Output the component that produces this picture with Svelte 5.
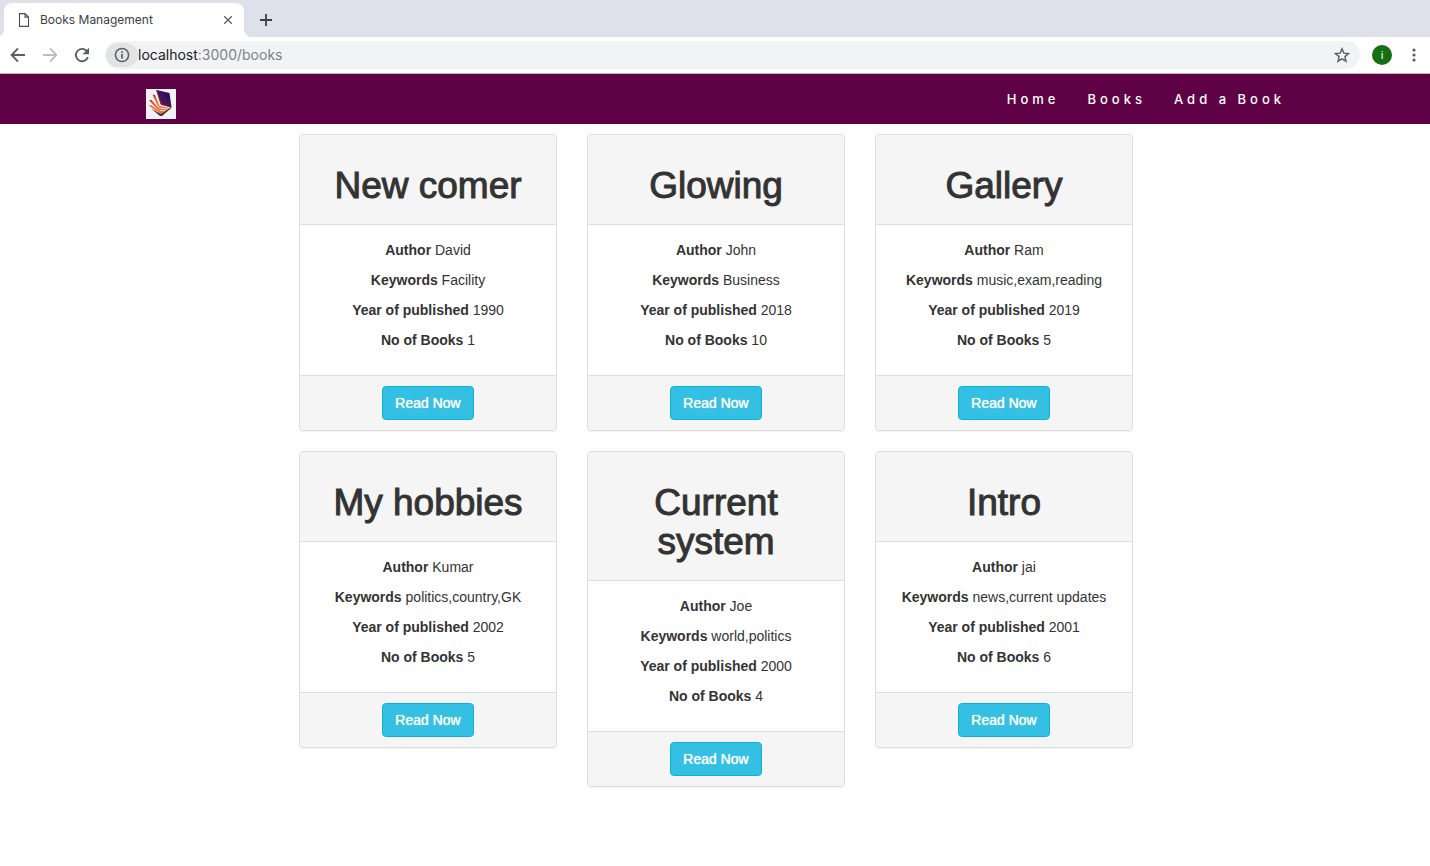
<script>
  const links = ['Home', 'Books', 'Add a Book'];
  const books = [
    { title: 'New comer', author: 'David', keywords: 'Facility', year: 1990, count: 1 },
    { title: 'Glowing', author: 'John', keywords: 'Business', year: 2018, count: 10 },
    { title: 'Gallery', author: 'Ram', keywords: 'music,exam,reading', year: 2019, count: 5 },
    { title: 'My hobbies', author: 'Kumar', keywords: 'politics,country,GK', year: 2002, count: 5 },
    { title: 'Current system', author: 'Joe', keywords: 'world,politics', year: 2000, count: 4 },
    { title: 'Intro', author: 'jai', keywords: 'news,current updates', year: 2001, count: 6 }
  ];
</script>

<div class="browser">
  <div class="tabs">
    <div class="tab">
      <svg class="file" width="12" height="14" viewBox="0 0 12 14" fill="none" stroke="#4a4d51" stroke-width="1.1">
        <path d="M1.500 .6h5.500l3.500 3.500v9.300h-9z M7 .6v3.500h3.500" />
      </svg>
      <span class="tab-title">Books Management</span>
      <button class="plain" aria-label="Close tab">
        <svg width="10" height="10" viewBox="0 0 10 10" stroke="#5f6368" stroke-width="1.4"><path d="M1.2 1.2l7.6 7.6M8.8 1.2L1.2 8.8" /></svg>
      </button>
    </div>
    <button class="plain new-tab" aria-label="New tab">
      <svg width="12" height="12" viewBox="0 0 12 12" stroke="#3c4043" stroke-width="1.8"><path d="M6 0v12M0 6h12" /></svg>
    </button>
  </div>
  <div class="toolbar">
    <button class="plain tool" aria-label="Back">
      <svg width="16" height="16" viewBox="0 0 16 16" fill="none" stroke="#5a5e63" stroke-width="1.9"><path d="M15 8H2M8 1.3L1.6 8 8 14.7" /></svg>
    </button>
    <button class="plain tool" aria-label="Forward">
      <svg width="16" height="16" viewBox="0 0 16 16" fill="none" stroke="#bcbec1" stroke-width="1.9"><path d="M1 8h13M8 1.3L14.4 8 8 14.7" /></svg>
    </button>
    <button class="plain tool" aria-label="Reload">
      <svg width="16" height="16" viewBox="0 0 16 16" fill="none" stroke="#5a5e63" stroke-width="1.9"><path d="M13.9 10.2A6.2 6.2 0 1 1 12.6 3.8L14 5.2" /><path d="M15 .8v6.4H8.6z" fill="#5a5e63" stroke="none" /></svg>
    </button>
    <div class="address">
      <button class="plain info" aria-label="Site information">
        <svg width="16" height="16" viewBox="0 0 16 16" fill="none" stroke="#5a5e63" stroke-width="1.5"><circle cx="8" cy="8" r="6.6" /><path d="M8 7v4.6M8 4.2v1.7" stroke-width="1.7" /></svg>
      </button>
      <span class="url"><b>localhost</b>:3000/books</span>
      <button class="plain" aria-label="Bookmark">
        <svg width="16" height="16" viewBox="0 0 16 16" fill="none" stroke="#5a5e63" stroke-width="1.4"><path d="M8 1.8l1.8 4.3 4.7.4-3.6 3.1 1.1 4.6L8 11.8l-4 2.4 1.1-4.6-3.6-3.1 4.7-.4z" /></svg>
      </button>
    </div>
    <button class="plain avatar">i</button>
    <button class="plain menu" aria-label="Menu">
      <svg width="4" height="14" viewBox="0 0 4 14" fill="#5a5e63"><circle cx="2" cy="2" r="1.6" /><circle cx="2" cy="7" r="1.6" /><circle cx="2" cy="12" r="1.6" /></svg>
    </button>
  </div>
</div>

<header>
  <div class="bar">
    <a class="logo" href="#home" aria-label="Home page">
      <svg width="30" height="30" viewBox="0 0 30 30">
        <defs>
          <linearGradient id="cover" x1="0" y1="1" x2="1" y2="0">
            <stop offset="0" stop-color="#a52448" /><stop offset=".4" stop-color="#4b1458" /><stop offset="1" stop-color="#170b55" />
          </linearGradient>
          <linearGradient id="page" x1="0" y1="0" x2="1" y2="1">
            <stop offset="0" stop-color="#a8301f" /><stop offset=".4" stop-color="#ef5b24" /><stop offset="1" stop-color="#f29a6a" />
          </linearGradient>
        </defs>
        <rect width="30" height="30" fill="#f3f1f3" />
        <path d="M6.500 5.500l2.500 .5 5.500 13-1 1.500z" fill="url(#page)" />
        <path d="M3 11l2.500 0 9 10-1 2z" fill="url(#page)" />
        <path d="M2.500 16l2.500 .5 9.500 6-.5 2z" fill="url(#page)" />
        <path d="M14 17l9 2-8 6.500-2-2z" fill="#ef703c" />
        <path d="M14 19.200l8 1M14 21.500l6.500 .5" stroke="#fbe3d8" stroke-width=".9" fill="none" />
        <path d="M5 19.500l10 5.500 10-7v1.200l-9 7.800h-2z" fill="#49303a" />
        <path d="M10.500 1l13 3 2 14.200-10.500-2.700z" fill="url(#cover)" />
        <path d="M10.500 1l4.500 14.500 10.500 2.700" fill="none" stroke="#6b2038" stroke-width=".8" />
      </svg>
    </a>
    <nav>
      {#each links as link}
        <a href="#{link.toLowerCase().replaceAll(' ', '-')}">{link}</a>
      {/each}
    </nav>
  </div>
</header>

<main>
  {#each books as book}
    <article>
      <div class="head"><h1>{book.title}</h1></div>
      <div class="body">
        <p><strong>Author</strong> {book.author}</p>
        <p><strong>Keywords</strong> {book.keywords}</p>
        <p><strong>Year of published</strong> {book.year}</p>
        <p><strong>No of Books</strong> {book.count}</p>
      </div>
      <div class="foot"><button class="read">Read Now</button></div>
    </article>
  {/each}
</main>

<style>
  :global(body) {
    margin: 0;
    background: #fff;
    color: #333;
    font: 14px/20px 'Liberation Sans', Arial, sans-serif;
  }
  * { box-sizing: border-box; }
  svg { display: block; }
  .plain {
    display: flex;
    align-items: center;
    justify-content: center;
    padding: 0;
    border: 0;
    background: none;
  }

  .browser { font-family: Inter, sans-serif; border-bottom: 1px solid #b9b6b9; }
  .tabs {
    display: flex;
    align-items: center;
    height: 37px;
    padding: 3px 4px 0;
    background: #dee1e9;
  }
  .tab {
    position: relative;
    display: flex;
    align-items: center;
    width: 240px;
    height: 34px;
    padding: 0 11px 0 14px;
    border-radius: 8px 8px 0 0;
    background: #fff;
  }
  .tab::before, .tab::after {
    content: '';
    position: absolute;
    bottom: 0;
    width: 8px;
    height: 8px;
  }
  .tab::before { left: -8px; background: radial-gradient(circle at 0 0, transparent 8px, #fff 8px); }
  .tab::after { right: -8px; background: radial-gradient(circle at 100% 0, transparent 8px, #fff 8px); }
  .tab-title { flex: 1; padding-left: 10px; font-size: 12px; color: #3c4043; }
  .new-tab { margin-left: 16px; }

  .toolbar {
    display: flex;
    align-items: center;
    height: 36px;
    padding: 0 12px 0 10px;
    background: #fff;
  }
  .tool { margin-right: 16px; }
  .address {
    display: flex;
    flex: 1;
    align-items: center;
    height: 28px;
    padding: 0 10px 0 1px;
    border-radius: 14px;
    background: #f1f3f4;
  }
  .tool:nth-child(3) { margin-right: 15px; }
  .info { width: 32px; height: 24px; border-radius: 12px; background: #e1e3e5; }
  .url { flex: 1; font-size: 14px; color: #7d8388; }
  .url b { font-weight: 400; color: #202124; }
  .avatar {
    width: 20px;
    height: 20px;
    margin: 0 18px 0 12px;
    border-radius: 50%;
    background: #176f14;
    color: #fff;
    font: 11px Roboto, sans-serif;
  }
  .menu { width: 8px; }

  header { background: #5f0245; }
  .bar {
    display: flex;
    justify-content: space-between;
    align-items: flex-start;
    max-width: 1168px;
    height: 50px;
    margin: 0 auto;
    padding: 15px 0 0 15px;
  }
  nav { display: flex; }
  nav a {
    padding: 0 14px;
    color: #fff;
    font: 500 13px/20px Inter, sans-serif;
    letter-spacing: 4px;
    text-decoration: none;
  }

  main {
    display: grid;
    grid-template-columns: repeat(3, 1fr);
    align-items: start;
    gap: 20px 30px;
    max-width: 836px;
    margin: 0 auto;
    padding: 10px 0 20px 2px;
    text-align: center;
  }
  article {
    border: 1px solid #ddd;
    border-radius: 4px;
    background: #fff;
    box-shadow: 0 1px 1px rgba(0, 0, 0, .05);
    overflow: hidden;
  }
  .head { padding: 10px 15px; border-bottom: 1px solid #ddd; background: #f5f5f5; }
  h1 {
    margin: 21px 0 9px;
    font-size: 37px;
    line-height: 39px;
    font-weight: 400;
    -webkit-text-stroke: 1px #333;
  }
  .body { padding: 15px; }
  p { margin: 0 0 10px; }
  .foot { padding: 10px 15px; border-top: 1px solid #ddd; background: #f5f5f5; }
  .read {
    padding: 6px 12px;
    border: 1px solid #09b4dc;
    border-radius: 4px;
    background: #33c0e3;
    color: #fff;
    font: 14px/20px 'Liberation Sans', Arial, sans-serif;
    text-shadow: 0 0 1px #fff;
  }
</style>
